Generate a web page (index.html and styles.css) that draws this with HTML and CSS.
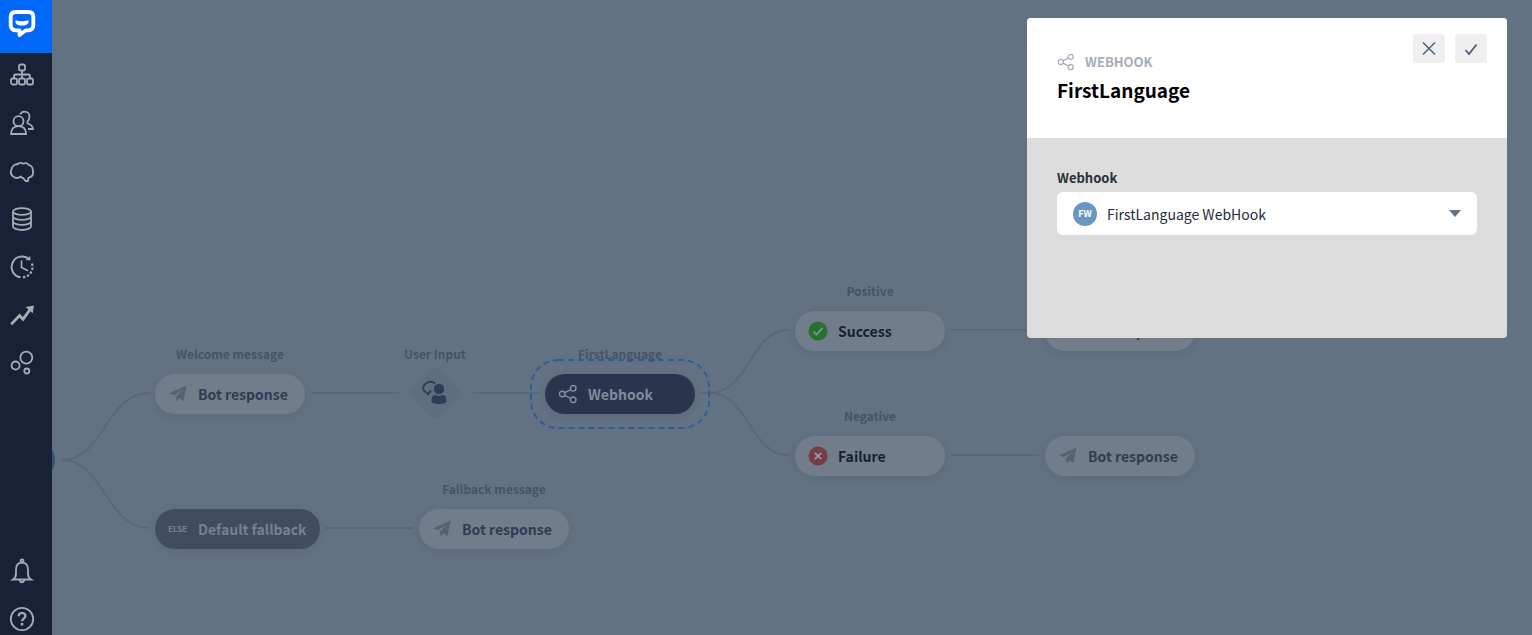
FILE: index.html
```html
<!DOCTYPE html>
<html lang="en">
<head>
<meta charset="utf-8">
<title>FirstLanguage - Bot builder</title>
<link rel="stylesheet" href="styles.css">
</head>
<body>
<svg class="defs" aria-hidden="true">
  <symbol id="plane" viewBox="0 0 20 20"><path d="M1 9.200 18.500 1.500 15.500 17 11.300 14.300 9 17.500 7.700 12.800 14.500 5.500 5.800 11.300Z"/></symbol>
  <symbol id="share" viewBox="0 0 20 20"><g fill="none" stroke="currentColor" stroke-width="1.4"><circle cx="4.200" cy="10" r="2.800"/><circle cx="15.200" cy="4.300" r="2.800"/><circle cx="15.200" cy="15.800" r="2.800"/><path d="M6.700 8.700 12.700 5.600M6.700 11.300 12.700 14.500"/></g></symbol>
</svg>
<div class="app">
  <aside class="sidebar">
    <a class="logo" href="#" aria-label="Home">
      <svg width="28" height="28" viewBox="0 0 28 28"><path d="M7.500 2h13Q25 2 25.300 6.500v9Q25 20 20.500 20.400h-3L11.500 25v-4.600h-4Q3 20 2.700 15.500v-9Q3 2 7.500 2Z" fill="none" stroke="#fff" stroke-width="3.800" stroke-linejoin="round"/><path d="M7.500 10.300q6.500 1.800 13 0v2.400q-1.200 2.800-6.500 2.800t-6.500-2.800z" fill="#fff"/></svg>
    </a>
    <nav class="nav" aria-label="Main">
      <a href="#" aria-label="Stories"><svg viewBox="0 0 24 24"><rect x="9" y="1.500" width="6" height="6" rx="1.800"/><rect x="1" y="15.500" width="6" height="6" rx="1.800"/><rect x="9" y="15.500" width="6" height="6" rx="1.800"/><rect x="17" y="15.500" width="6" height="6" rx="1.800"/><path d="M12 7.500v8M4 15.500v-2.500q0-1.500 1.500-1.500h13q1.500 0 1.500 1.500v2.500"/></svg></a>
      <a href="#" aria-label="Users"><svg viewBox="0 0 24 24"><circle cx="8.500" cy="10.200" r="5"/><path d="M1 23c0-5 3-7.800 7.500-7.800S16 18 16 23ZM10.200 3.400C11.500 1 13 .7 14.600.7c3 0 4.900 2.200 4.900 5 0 2-.7 3.600-2 4.700L17.500 12.500c3.200 1 5.300 2.500 5.500 5.500h-5"/></svg></a>
      <a href="#" aria-label="Training"><svg viewBox="0 0 24 24"><path d="M3.800 18C1.200 16.400.200 13.300 1.400 10.500 2 7.300 4.500 5 7.500 5.300c1.500-1.700 4-1.600 5.500-.5 2.200-1 4.500-.6 5.500 1.100 2.600.5 4.500 2.800 4.300 5.500 1 3.600-.8 6.300-4.300 7.400l-.6 3.200h-2.300L13.200 19c-1.500-.1-1.900-.5-2.500-1.500-2.300 1.700-4.900 1.800-6.900.5Z"/></svg></a>
      <a href="#" aria-label="Data"><svg viewBox="0 0 24 24"><ellipse cx="12" cy="4.500" rx="9" ry="3.400"/><path d="M3 4.500v15c0 1.900 4 3.500 9 3.500s9-1.600 9-3.500v-15M3 9.500c0 1.900 4 3.400 9 3.400s9-1.500 9-3.400M3 14.500c0 1.900 4 3.400 9 3.400s9-1.500 9-3.400"/></svg></a>
      <a href="#" aria-label="Archives"><svg viewBox="0 0 24 24"><path d="M10.500 22.300A10.500 10.500 0 1 1 18 3.200" stroke-width="2"/><path d="M15.500 5.300h5l-.3-4.300Z" fill="currentColor" stroke="none"/><path d="M22 8.500a10.500 10.500 0 0 1-9 13.800" stroke-width="2.200" stroke-dasharray="2.400 1.700"/><path d="M11.500 5.500V12.500l6.500 3.200" stroke-width="1.600"/></svg></a>
      <a href="#" aria-label="Analyze"><svg viewBox="0 0 24 24"><path d="M1.200 21.200 9.600 12.500l3.400 3.700L20.500 6" stroke-width="2.800"/><path d="M24 2.500 15.500 4l7.200 6.300Z" fill="currentColor" stroke="none"/></svg></a>
      <a href="#" aria-label="Integrations"><svg viewBox="0 0 24 24"><circle cx="16.300" cy="6.600" r="6"/><circle cx="5.600" cy="14.500" r="4"/><circle cx="16.800" cy="20" r="2.500"/></svg></a>
    </nav>
    <nav class="nav nav-bottom" aria-label="Support">
      <a href="#" aria-label="Notifications"><svg viewBox="0 0 24 24"><circle cx="12" cy="2" r="1.500"/><path d="M3 20.500c2.400-1.500 3-3 3-6v-3.700C6 6.500 8 3.700 12 3.700s6 2.800 6 7.100v3.700c0 3 .6 4.500 3 6ZM9.800 21c.2 3 4.200 3 4.400 0"/></svg></a>
      <a href="#" aria-label="Help"><svg viewBox="0 0 24 24"><circle cx="12" cy="12" r="11.200"/><path d="M8.700 9.200C8.700 6.800 10.100 6 12 6s3.400 1 3.400 3c0 2.600-3.400 2.700-3.400 5.200" stroke-width="2.200"/><path d="M12 16v2.500" stroke-width="2.600"/></svg></a>
    </nav>
  </aside>

  <main class="canvas">
    <svg class="links" width="1532" height="635" aria-hidden="true">
      <path d="M62 460C104 460 106 393 149 393M62 460C104 460 106 528 149 528M62 460.500h8M312 393h87M473 393h66M325 528h88M701 393h8C750 393 749 330 789 330M709 393C750 393 749 455 789 455M951 330h88M951 455h88"/>
      <rect class="selection" x="531" y="360" width="178" height="68" rx="27"/>
      <rect class="diamond" x="415" y="373" width="40" height="40" rx="6" transform="rotate(45 435 393)"/>
    </svg>
    <span class="start"></span>

    <section class="node welcome"><h3>Welcome message</h3><div class="pill"><svg class="icon"><use href="#plane"/></svg>Bot response</div></section>
    <section class="node input"><h3>User Input</h3>
      <svg class="user" width="26" height="26" viewBox="0 0 26 26"><path d="M4.800 12.700C.9 11.500.3 7.300 2.500 4.600c3-3.800 8.500-3.500 10.700-1M4.800 12.700l1.200 1.800L8 11.500h1.500" fill="none" stroke="#2c3e55" stroke-width="1.800"/><circle cx="17" cy="9" r="5.200" fill="#2c3e55"/><path d="M9.500 21.500c0-4.500 1.500-6.500 4-6.500 2.200 1.300 4.800 1.300 7 0 2.500 0 4 2 4 6.500 0 3.300-15 3.300-15 0Z" fill="#2c3e55"/></svg>
    </section>
    <section class="node hook"><h3>FirstLanguage</h3><div class="pill dark"><svg class="icon"><use href="#share"/></svg>Webhook</div></section>
    <section class="node positive"><h3>Positive</h3><div class="pill result"><svg class="icon" viewBox="0 0 20 20"><circle cx="10" cy="10" r="9.500" fill="#26712f"/><path d="m5.500 10.500 3 3 6-6.300" fill="none" stroke="#8494a0" stroke-width="1.700"/></svg>Success</div></section>
    <section class="node negative"><h3>Negative</h3><div class="pill result"><svg class="icon" viewBox="0 0 20 20"><circle cx="10" cy="10" r="9.500" fill="#763d49"/><path d="m6.800 6.800 6.400 6.400m0-6.400-6.400 6.400" fill="none" stroke="#929ba8" stroke-width="1.700"/></svg>Failure</div></section>
    <section class="node after-success"><div class="pill"><svg class="icon"><use href="#plane"/></svg>Bot response</div></section>
    <section class="node after-failure"><div class="pill"><svg class="icon"><use href="#plane"/></svg>Bot response</div></section>
    <section class="node default"><div class="pill fallback"><span class="else">ELSE</span>Default fallback</div></section>
    <section class="node message"><h3>Fallback message</h3><div class="pill"><svg class="icon"><use href="#plane"/></svg>Bot response</div></section>

    <form class="panel">
      <header class="panel-head">
        <div class="heading">
          <p class="kind"><svg class="kind-icon"><use href="#share"/></svg>WEBHOOK</p>
          <h2>FirstLanguage</h2>
        </div>
        <div class="actions">
          <button type="button" aria-label="Close"><svg width="16" height="16" viewBox="0 0 16 16"><path d="m2 1.500 12 12M14 1.500 2 13.500"/></svg></button>
          <button type="button" aria-label="Save"><svg width="16" height="16" viewBox="0 0 16 16"><path d="m2.500 9 3.500 4 7.500-9.500" stroke-width="1.800"/></svg></button>
        </div>
      </header>
      <div class="panel-body">
        <label for="webhook">Webhook</label>
        <div class="select-box">
          <select id="webhook"><option>FirstLanguage WebHook</option></select>
          <span class="avatar" aria-hidden="true">FW</span>
          <svg class="caret" width="12" height="7" viewBox="0 0 12 7" aria-hidden="true"><path d="M0 0h12L6 7Z"/></svg>
        </div>
      </div>
    </form>
  </main>
</div>
</body>
</html>
```
FILE: styles.css
```css
* { box-sizing: border-box; }
body, h2, h3, p { margin: 0; }
body, button, select { font-family: "Noto Sans CJK SC", "Noto Sans", sans-serif; }
svg { display: block; }
.defs { position: absolute; width: 0; height: 0; }

.app {
  display: grid;
  grid-template-columns: 52px 1fr;
  min-height: 100vh;
  background: #637282;
}

.sidebar {
  grid-area: 1 / 1;
  z-index: 1;
  display: flex;
  flex-direction: column;
  background: #182136;
  color: #a3adb6;
}
.logo {
  height: 53px;
  padding: 10px 8px;
  background: #0068f9;
}
.nav {
  display: flex;
  flex-direction: column;
  gap: 24px;
  padding: 10px 10px 4px;
}
.nav-bottom { margin-top: auto; }
.nav a { width: 24px; height: 24px; color: inherit; }
.nav svg {
  width: 24px;
  height: 24px;
  overflow: visible;
  fill: none;
  stroke: currentColor;
  stroke-width: 1.8;
}

/* The flow board runs underneath the sidebar. */
.canvas {
  grid-area: 1 / 1 / 2 / 3;
  position: relative;
  overflow: hidden;
}
.links { position: absolute; top: 0; left: 0; fill: none; stroke: #596878; stroke-width: 2; }
.selection { stroke: #305c99; stroke-dasharray: 6 4; }
.diamond { fill: #5f6e7e; stroke: none; }
.start {
  position: absolute;
  left: 15px;
  top: 440px;
  width: 40px;
  height: 40px;
  border-radius: 20px;
  background: #365373;
}

.node {
  position: absolute;
  display: flex;
  flex-direction: column;
  gap: 10px;
  align-items: center;
  min-width: 150px;
}
.node h3 {
  font-size: 12px;
  font-weight: 700;
  line-height: 20px;
  color: #445468;
}
.welcome { left: 155px; top: 344px; }
.input { left: 360px; top: 344px; }
.hook { left: 545px; top: 344px; }
.positive { left: 795px; top: 281px; }
.negative { left: 795px; top: 406px; }
.after-success { left: 1045px; top: 311px; }
.after-failure { left: 1045px; top: 436px; }
.default { left: 155px; top: 509px; }
.message { left: 419px; top: 479px; }

.pill {
  display: flex;
  align-items: center;
  gap: 10px;
  width: 100%;
  height: 40px;
  padding: 0 13px;
  border-radius: 20px;
  background: #727d8b;
  box-shadow: 0 2px 8px rgba(40, 60, 80, 0.12);
  color: #2e3d52;
  font-size: 14px;
  font-weight: 700;
  line-height: 20px;
  white-space: nowrap;
}
.icon { flex: none; width: 20px; height: 20px; fill: #526376; color: #8390a0; }
.dark { background: #2a354d; color: #7f8c9c; }
.result { color: #172134; }
.fallback { background: #414c61; color: #758190; }
.else { width: 20px; font-size: 8px; font-weight: 700; }
.user { margin-top: 6px; }

.panel {
  position: absolute;
  top: 18px;
  right: 25px;
  width: 480px;
  border-radius: 4px;
  overflow: hidden;
  background: #dcdcdc;
}
.panel-head {
  display: flex;
  justify-content: space-between;
  padding: 16px 20px 30px 30px;
  background: #fff;
}
.heading { padding-top: 18px; }
.kind {
  display: flex;
  align-items: center;
  gap: 10px;
  color: #a6adb8;
  font-size: 13px;
  font-weight: 700;
  line-height: 20px;
}
.kind-icon { width: 18px; height: 18px; }
.panel h2 { font-size: 19px; font-weight: 700; line-height: 36px; color: #000; }
.actions { display: flex; align-items: flex-start; gap: 10px; }
.actions button {
  display: grid;
  place-items: center;
  width: 32px;
  height: 29px;
  padding: 0;
  border: 0;
  border-radius: 3px;
  background: #efefef;
}
.actions svg { fill: none; stroke: #4d5f78; stroke-width: 1.5; }

.panel-body { min-height: 200px; padding: 30px; }
.panel-body label {
  display: block;
  padding-bottom: 4px;
  color: #2a303a;
  font-size: 13px;
  font-weight: 700;
  line-height: 20px;
}
.select-box { position: relative; }
.select-box select {
  display: block;
  width: 100%;
  height: 43px;
  padding: 0 40px 0 50px;
  border: 0;
  border-radius: 6px;
  appearance: none;
  background: #fff;
  color: #242c38;
  font-size: 14px;
}
.avatar {
  position: absolute;
  left: 16px;
  top: 10px;
  width: 24px;
  border-radius: 12px;
  background: #6a96c2;
  color: #fff;
  font-size: 9px;
  font-weight: 700;
  line-height: 24px;
  text-align: center;
  pointer-events: none;
}
.caret {
  position: absolute;
  right: 16px;
  top: 18px;
  fill: #637385;
  pointer-events: none;
}
```
